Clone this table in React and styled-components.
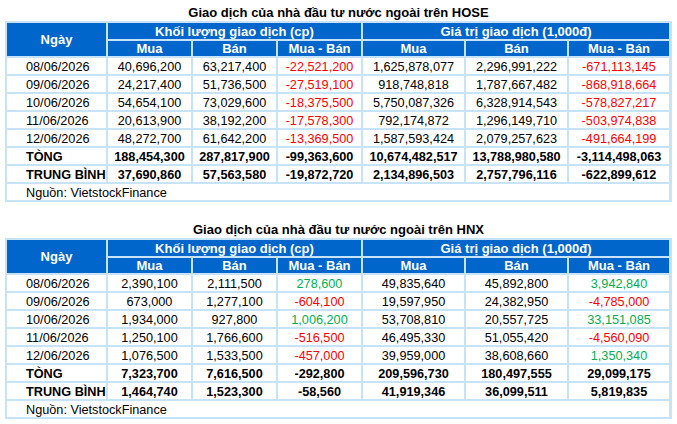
import React from 'react';
import styled, { createGlobalStyle } from 'styled-components';

const hose = {
  title: 'Giao dịch của nhà đầu tư nước ngoài trên HOSE',
  rows: [
    ['08/06/2026', '40,696,200', '63,217,400', '-22,521,200', '1,625,878,077', '2,296,991,222', '-671,113,145'],
    ['09/06/2026', '24,217,400', '51,736,500', '-27,519,100', '918,748,818', '1,787,667,482', '-868,918,664'],
    ['10/06/2026', '54,654,100', '73,029,600', '-18,375,500', '5,750,087,326', '6,328,914,543', '-578,827,217'],
    ['11/06/2026', '20,613,900', '38,192,200', '-17,578,300', '792,174,872', '1,296,149,710', '-503,974,838'],
    ['12/06/2026', '48,272,700', '61,642,200', '-13,369,500', '1,587,593,424', '2,079,257,623', '-491,664,199'],
  ],
  total: ['TÒNG', '188,454,300', '287,817,900', '-99,363,600', '10,674,482,517', '13,788,980,580', '-3,114,498,063'],
  avg: ['TRUNG BÌNH', '37,690,860', '57,563,580', '-19,872,720', '2,134,896,503', '2,757,796,116', '-622,899,612'],
};

const hnx = {
  title: 'Giao dịch của nhà đầu tư nước ngoài trên HNX',
  rows: [
    ['08/06/2026', '2,390,100', '2,111,500', '278,600', '49,835,640', '45,892,800', '3,942,840'],
    ['09/06/2026', '673,000', '1,277,100', '-604,100', '19,597,950', '24,382,950', '-4,785,000'],
    ['10/06/2026', '1,934,000', '927,800', '1,006,200', '53,708,810', '20,557,725', '33,151,085'],
    ['11/06/2026', '1,250,100', '1,766,600', '-516,500', '46,495,330', '51,055,420', '-4,560,090'],
    ['12/06/2026', '1,076,500', '1,533,500', '-457,000', '39,959,000', '38,608,660', '1,350,340'],
  ],
  total: ['TÒNG', '7,323,700', '7,616,500', '-292,800', '209,596,730', '180,497,555', '29,099,175'],
  avg: ['TRUNG BÌNH', '1,464,740', '1,523,300', '-58,560', '41,919,346', '36,099,511', '5,819,835'],
};

const GlobalStyle = createGlobalStyle`
  body {
    margin: 0;
    background: #ffffff;
    font-family: "Liberation Sans", Arial, sans-serif;
  }
`;

const Page = styled.div`
  width: 667px;
  padding: 5px 0 0 5px;
  display: flex;
  flex-direction: column;
  gap: 20px;
`;

const Block = styled.section`
  display: flex;
  flex-direction: column;
`;

const Title = styled.h2`
  margin: 0;
  height: 16px;
  line-height: 16px;
  font-size: 13px;
  font-weight: bold;
  color: #000000;
  text-align: center;
`;

const Grid = styled.div`
  display: grid;
  grid-template-columns: 99px 83px 83px 83px 101px 101px 100px;
  grid-template-rows: 16px 15px;
  grid-auto-rows: 16px;
  gap: 2px;
  padding: 2px;
  background: #c6e3f7;
`;

const HeadCell = styled.div`
  background: #0066cc;
  color: #ffffff;
  font-weight: bold;
  font-size: 13px;
  display: flex;
  align-items: center;
  justify-content: center;
  grid-row: ${(p) => (p.$tall ? '1 / 3' : 'auto')};
  grid-column: ${(p) => (p.$wide ? 'span 3' : 'auto')};
`;

const Cell = styled.div`
  background: #ffffff;
  font-size: 12.7px;
  line-height: 16px;
  padding-top: 1px;
  box-sizing: border-box;
  white-space: nowrap;
  font-weight: ${(p) => (p.$bold ? 'bold' : 'normal')};
  color: ${(p) => (p.$tone === 'neg' ? '#ff0000' : p.$tone === 'pos' ? '#00b050' : '#000000')};
`;

const DateCell = styled(Cell)`
  padding-left: 19px;
  text-align: left;
`;

const NumCell = styled(Cell)`
  text-align: center;
`;

const SourceCell = styled(Cell)`
  grid-column: 1 / -1;
  padding-left: 19px;
`;

const toneOf = (v) => (v.startsWith('-') ? 'neg' : 'pos');

const Row = ({ values, bold, colored }) => (
  <>
    <DateCell $bold={bold}>{values[0]}</DateCell>
    {values.slice(1).map((v, i) => (
      <NumCell key={i} $bold={bold} $tone={colored && (i === 2 || i === 5) ? toneOf(v) : undefined}>
        {v}
      </NumCell>
    ))}
  </>
);

const ForeignTable = ({ data }) => (
  <Block>
    <Title>{data.title}</Title>
    <Grid>
      <HeadCell $tall>Ngày</HeadCell>
      <HeadCell $wide>Khối lượng giao dịch (cp)</HeadCell>
      <HeadCell $wide>Giá trị giao dịch (1,000đ)</HeadCell>
      <HeadCell>Mua</HeadCell>
      <HeadCell>Bán</HeadCell>
      <HeadCell>Mua - Bán</HeadCell>
      <HeadCell>Mua</HeadCell>
      <HeadCell>Bán</HeadCell>
      <HeadCell>Mua - Bán</HeadCell>
      {data.rows.map((r) => (
        <Row key={r[0]} values={r} colored />
      ))}
      <Row values={data.total} bold />
      <Row values={data.avg} bold />
      <SourceCell>Nguồn: VietstockFinance</SourceCell>
    </Grid>
  </Block>
);

const App = () => (
  <>
    <GlobalStyle />
    <Page>
      <ForeignTable data={hose} />
      <ForeignTable data={hnx} />
    </Page>
  </>
);

export default App;
